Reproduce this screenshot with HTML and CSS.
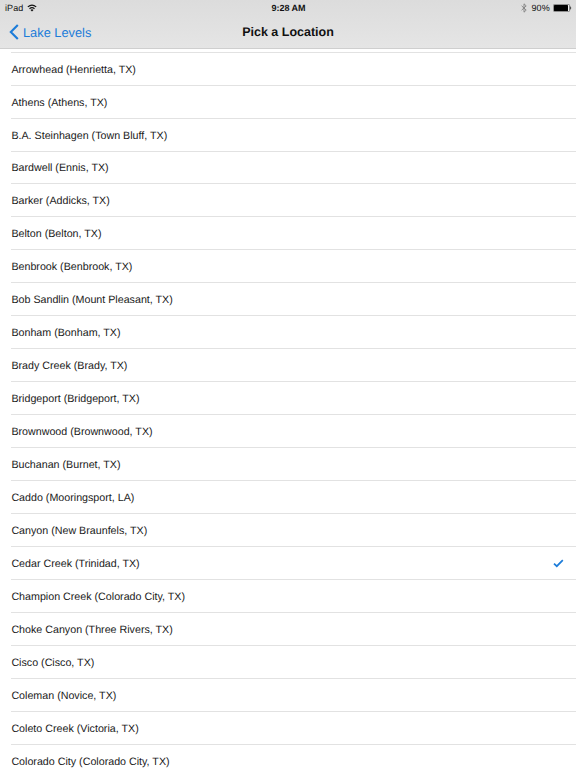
FILE: index.html
```html
<!DOCTYPE html>
<html lang="en">
<head>
    <meta charset="UTF-8">
    <meta name="viewport" content="width=device-width, initial-scale=1.0">
    <title>Pick a Location</title>
    <link rel="stylesheet" href="styles.css">
</head>
<body>
    <header class="header">
        <!-- Status bar -->
        <div class="status-bar">
            <div class="status-left">
                <span class="device">iPad</span>
                <svg class="wifi" viewBox="0 0 10 8" width="10" height="8">
                    <path d="M0.8 2.9 Q5 -0.7 9.2 2.9 M2.5 4.7 Q5 2.6 7.5 4.7" fill="none" stroke="#111" stroke-width="1.2"/>
                    <path d="M3.5 5.9 Q5 4.8 6.5 5.9 L5 7.5 Z" fill="#111"/>
                </svg>
            </div>
            <span class="time">9:28 AM</span>
            <div class="status-right">
                <svg class="bluetooth" viewBox="0 0 6 10" width="6" height="10">
                    <path d="M0.6 2.8 L5.2 7.1 L3 9.2 V0.8 L5.2 2.9 L0.6 7.2" fill="none" stroke="#808080" stroke-width="0.9"/>
                </svg>
                <span class="percent">90%</span>
                <svg class="battery" viewBox="0 0 19 8" width="19" height="8">
                    <rect x="0.4" y="0.4" width="16.2" height="7.2" rx="1.2" fill="#eee" stroke="#444" stroke-width="0.6"/>
                    <rect x="1" y="1" width="14" height="6" rx="0.5" fill="#000"/>
                    <path d="M17.3 2.6 Q18.6 4 17.3 5.4 Z" fill="#222" stroke="#222" stroke-width="0.4"/>
                </svg>
            </div>
        </div>

        <!-- Navigation bar -->
        <nav class="nav-bar">
            <a class="back" href="#">
                <svg viewBox="0 0 10 16" width="10" height="16">
                    <path d="M8.8 0.9 L1.8 8 L8.8 15.1" fill="none" stroke="#1c7cd9" stroke-width="2.1"/>
                </svg>
                <span>Lake Levels</span>
            </a>
            <h1>Pick a Location</h1>
        </nav>
    </header>

    <ul class="locations">
        <li>Arrowhead (Henrietta, TX)</li>
        <li>Athens (Athens, TX)</li>
        <li>B.A. Steinhagen (Town Bluff, TX)</li>
        <li>Bardwell (Ennis, TX)</li>
        <li>Barker (Addicks, TX)</li>
        <li>Belton (Belton, TX)</li>
        <li>Benbrook (Benbrook, TX)</li>
        <li>Bob Sandlin (Mount Pleasant, TX)</li>
        <li>Bonham (Bonham, TX)</li>
        <li>Brady Creek (Brady, TX)</li>
        <li>Bridgeport (Bridgeport, TX)</li>
        <li>Brownwood (Brownwood, TX)</li>
        <li>Buchanan (Burnet, TX)</li>
        <li>Caddo (Mooringsport, LA)</li>
        <li>Canyon (New Braunfels, TX)</li>
        <li class="selected">
            Cedar Creek (Trinidad, TX)
            <svg class="check" viewBox="0 0 11 9" width="11" height="9">
                <path d="M1 4.6 L3.8 7.2 L9.8 1.2" fill="none" stroke="#1c7cd9" stroke-width="1.7"/>
            </svg>
        </li>
        <li>Champion Creek (Colorado City, TX)</li>
        <li>Choke Canyon (Three Rivers, TX)</li>
        <li>Cisco (Cisco, TX)</li>
        <li>Coleman (Novice, TX)</li>
        <li>Coleto Creek (Victoria, TX)</li>
        <li>Colorado City (Colorado City, TX)</li>
    </ul>
</body>
</html>
```
FILE: styles.css
```css
* {
    box-sizing: border-box;
}
body {
    font-family: "Liberation Sans", Arial, sans-serif;
    text-rendering: geometricPrecision;
    margin: 0;
    height: 768px;
    overflow: hidden;
    background-color: #fff;
    color: #1a1a1a;
}
.header {
    height: 49px;
    background: linear-gradient(#dcdcdc, #e5e5e5);
    border-bottom: 1px solid #cfcfcf;
}
.status-bar {
    display: grid;
    grid-template-columns: 1fr auto 1fr;
    align-items: center;
    height: 16px;
    padding: 0 4px 0 5px;
    font-size: 9px;
    color: #111;
}
.status-left,
.status-right {
    display: flex;
    align-items: center;
}
.device {
    letter-spacing: 0.1px;
}
.wifi {
    margin-left: 4px;
}
.time {
    font-weight: bold;
}
.status-right {
    justify-content: flex-end;
}
.percent {
    margin: 0 3px 0 4px;
    letter-spacing: 0.2px;
}
.nav-bar {
    display: grid;
    grid-template-columns: 1fr auto 1fr;
    align-items: center;
    height: 32px;
    padding: 0 9px;
}
.nav-bar h1 {
    margin: 0;
    font-size: 12.5px;
    font-weight: bold;
    color: #111;
}
.back {
    display: flex;
    align-items: center;
    gap: 4px;
    font-size: 12.8px;
    color: #1c7cd9;
    text-decoration: none;
}
.locations {
    list-style: none;
    margin: 2.6px 0 0 11px;
    padding: 0;
    border-top: 1px solid #e2e2e2;
}
.locations li {
    display: flex;
    align-items: center;
    justify-content: space-between;
    height: 32.97px;
    padding: 2px 12px 0 0.4px;
    border-bottom: 1px solid #e2e2e2;
    font-size: 10.7px;
    white-space: nowrap;
}
.locations .check {
    margin-top: -1px;
}
```
